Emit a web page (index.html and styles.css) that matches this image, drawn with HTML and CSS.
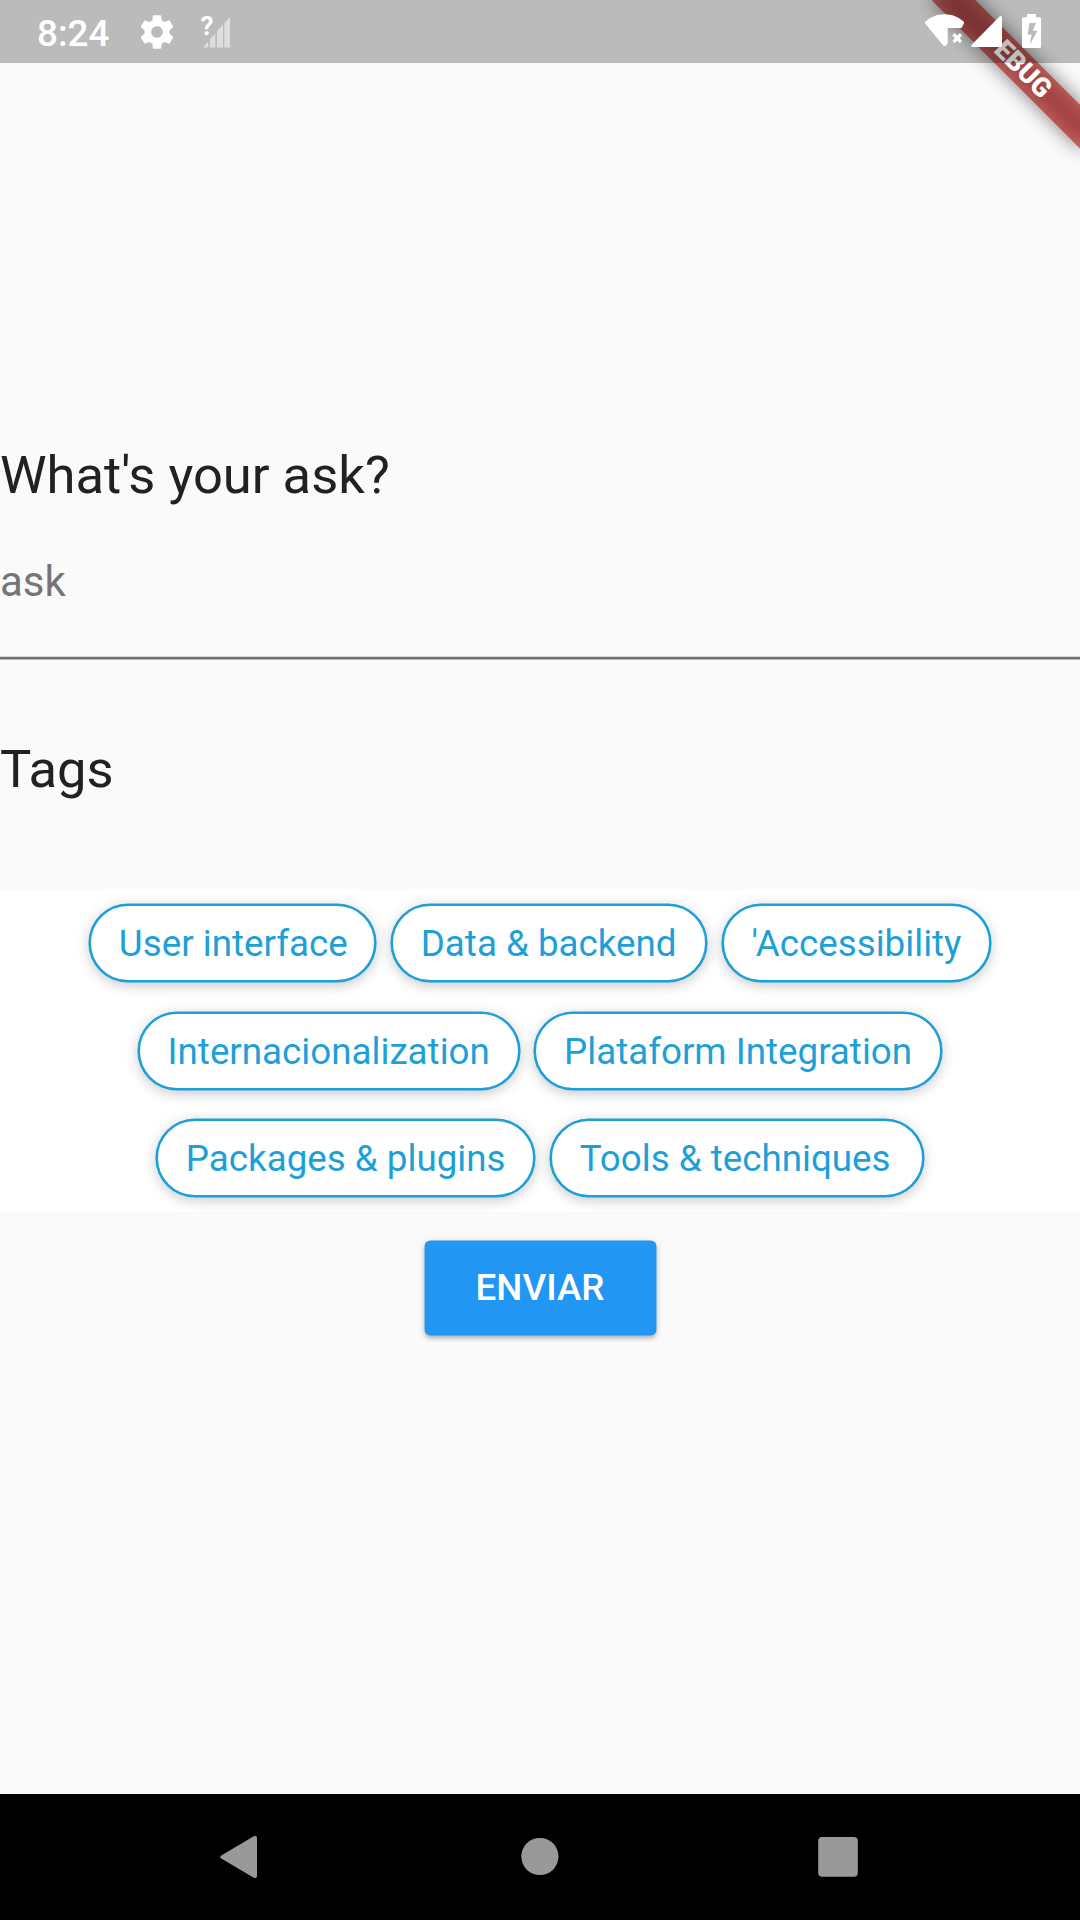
FILE: index.html
```html
<!DOCTYPE html>
<html lang="en">
<head>
<meta charset="utf-8">
<title>Ask</title>
<link rel="stylesheet" href="styles.css">
</head>
<body>
<div class="screen">
  <div class="banner" aria-hidden="true">
    <div class="banner-shadow"></div>
    <div class="banner-strip">DEBUG</div>
  </div>

  <header class="status-bar">
    <div class="status-left">
      <span class="clock">8:24</span>
      <svg class="icon-gear" viewBox="0 0 24 24"><path d="M19.43 12.98c.04-.32.07-.64.07-.98s-.03-.66-.07-.98l2.11-1.65c.19-.15.24-.42.12-.64l-2-3.46c-.12-.22-.39-.3-.61-.22l-2.49 1c-.52-.4-1.08-.73-1.69-.98l-.38-2.65C14.46 2.18 14.25 2 14 2h-4c-.25 0-.46.18-.49.42l-.38 2.65c-.61.25-1.17.59-1.69.98l-2.49-1c-.23-.09-.49 0-.61.22l-2 3.46c-.13.22-.07.49.12.64l2.11 1.65c-.04.32-.07.65-.07.98s.03.66.07.98l-2.11 1.65c-.19.15-.24.42-.12.64l2 3.46c.12.22.39.3.61.22l2.49-1c.52.4 1.08.73 1.69.98l.38 2.65c.03.24.24.42.49.42h4c.25 0 .46-.18.49-.42l.38-2.65c.61-.25 1.17-.59 1.69-.98l2.49 1c.23.09.49 0 .61-.22l2-3.46c.12-.22.07-.49-.12-.64l-2.11-1.65zM12 15.5c-1.93 0-3.5-1.57-3.5-3.5s1.57-3.5 3.5-3.5 3.500 1.57 3.500 3.500-1.57 3.500-3.500 3.500z"/></svg>
      <svg class="icon-unknown" viewBox="0 0 32 63">
        <path class="dim" d="M3 47.500L8.300 41.500V47.500zM10 39V47.500H15.300V33L14 34.500V36H12.500zM17 31V47.500H23V24.500zM24.300 23V47.500H30V17z"/>
        <text class="mark" x="0.400" y="34.500">?</text>
      </svg>
    </div>
    <svg class="status-right" viewBox="0 0 120 63">
      <path d="M5.200 23.600Q4.300 22.500 5.500 21.600C10.500 17 17 14.300 24.500 14.300S38.500 17 43.500 21.600Q44.700 22.500 43.800 23.600L41.500 28H27.700V43.500L25.800 45.500Q24.500 46.700 23.200 45.500z"/>
      <path class="cross" d="M33.500 34.300L41 42.100M41 34.300L33.500 42.100"/>
      <path d="M52.800 47Q50.300 46.500 51.700 44.800L79.500 16.600Q81.300 15.300 82 17.200V45.500Q82 47 80.500 47z"/>
      <path fill-rule="evenodd" d="M107 14H116V17.300H119.500Q121 17.300 121 18.800V46.500Q121 48 119.500 48H103.500Q102 48 102 46.500V18.800Q102 17.300 103.500 17.300H107zM109.500 23L107.700 34.500H111.700L110 44L117.400 30.700H113L115.800 23z"/>
    </svg>
  </header>

  <main class="content">
    <h1 class="heading">What's your ask?</h1>
    <div class="field">ask</div>
    <div class="underline"></div>
    <h2 class="heading tags-heading">Tags</h2>
    <section class="tags">
      <div class="tag-row">
        <span class="chip chip-ui">User interface</span>
        <span class="chip chip-data">Data &amp; backend</span>
        <span class="chip chip-a11y">'Accessibility</span>
      </div>
      <div class="tag-row">
        <span class="chip chip-i18n">Internacionalization</span>
        <span class="chip chip-platform">Plataform Integration</span>
      </div>
      <div class="tag-row">
        <span class="chip chip-packages">Packages &amp; plugins</span>
        <span class="chip chip-tools">Tools &amp; techniques</span>
      </div>
    </section>
    <button class="submit" type="button">ENVIAR</button>
  </main>

  <nav class="nav-bar">
    <svg viewBox="0 0 44 44"><path d="M4.300 20.500L36.800 1.300Q40 0 40 3V41Q40 44 36.800 42.700L4.300 23.500Q2.100 22 4.300 20.500z"/></svg>
    <svg viewBox="0 0 44 44"><circle cx="22.900" cy="21.500" r="18.600"/></svg>
    <svg viewBox="0 0 44 44"><rect x="2.200" y="2" width="39.600" height="39.800" rx="4"/></svg>
  </nav>
</div>
</body>
</html>
```

FILE: styles.css
```css
* { box-sizing: border-box; }

body {
  margin: 0;
  font-family: Roboto, sans-serif;
}

.screen {
  position: relative;
  display: flex;
  flex-direction: column;
  width: 1080px;
  height: 1920px;
  overflow: hidden;
  background: #fafafa;
}

/* Diagonal corner ribbon, rotated about the top-right corner */
.banner {
  position: absolute;
  top: 0;
  left: 1080px;
  width: 0;
  height: 0;
  transform: rotate(45deg);
}

.banner-shadow,
.banner-strip {
  position: absolute;
  left: -105px;
  top: 73.5px;
  width: 210px;
  height: 31.5px;
}

.banner-shadow {
  background: rgba(0, 0, 0, 0.5);
  filter: blur(9.6px);
}

.banner-strip {
  background: rgba(183, 28, 28, 0.627);
  color: #fff;
  font-size: 26.775px;
  font-weight: 900;
  line-height: 31.5px;
  text-align: center;
}

.status-bar {
  position: relative;
  display: flex;
  justify-content: space-between;
  height: 63px;
  padding: 0 38px 0 37px;
  background: rgba(0, 0, 0, 0.25);
}

.status-left { display: flex; align-items: center; }

.clock {
  width: 100px;
  padding-top: 4px;
  color: #fff;
  font-size: 36.75px;
  font-weight: 500;
  line-height: 63px;
}

.status-bar svg { fill: #fff; display: block; }
.icon-gear { width: 40px; height: 40px; }
.icon-unknown { width: 32px; height: 63px; margin-left: 23px; }
.icon-unknown .dim { fill: rgba(255, 255, 255, 0.5); }
.icon-unknown .mark { font-size: 26px; font-weight: 700; }
.status-right { width: 120px; height: 63px; margin-right: 2px; overflow: visible; }
.status-right .cross { stroke: #fff; stroke-width: 3.4px; fill: none; }

.content {
  flex: 1;
  display: flex;
  flex-direction: column;
}

.heading {
  margin: 381px 0 0;
  color: #212121;
  font-size: 52.5px;
  font-weight: 400;
  line-height: 62px;
}

.field {
  height: 49px;
  margin-top: 51px;
  color: #757575;
  font-size: 42px;
  line-height: 49px;
}

.underline {
  height: 4px;
  margin-top: 50px;
  background: linear-gradient(#dadada 1px, #707070 1px, #707070 3px, #b8b8b8 3px);
}

.tags-heading { margin-top: 78px; }

.tags {
  display: flex;
  flex-direction: column;
  gap: 29.5px;
  height: 323px;
  margin-top: 89px;
  padding-top: 15px;
  background: #fff;
}

.tag-row {
  display: flex;
  justify-content: center;
  gap: 14.3px;
}

.chip {
  height: 78px;
  padding-left: 28px;
  border: 2px solid #1e9fd8;
  border-radius: 39px;
  background: #fff;
  box-shadow: 0 0 0 0.6px #1e9fd8, 0 4px 12px rgba(0, 0, 0, 0.14), 0 1px 18px rgba(0, 0, 0, 0.09);
  color: #1e9fd8;
  font-size: 36.75px;
  line-height: 75px;
  white-space: nowrap;
}

.chip-ui { width: 287.6px; }
.chip-data { width: 316.5px; }
.chip-a11y { width: 269.6px; }
.chip-i18n { width: 382.2px; }
.chip-platform { width: 408.4px; }
.chip-packages { width: 379.6px; }
.chip-tools { width: 374.5px; }

.submit {
  align-self: center;
  width: 231px;
  height: 94px;
  margin-top: 29px;
  padding: 0;
  border: 0;
  border-radius: 5.25px;
  background: #2196f3;
  box-shadow: 0 0 0 0.4px #2196f3, 0 3px 5px rgba(0, 0, 0, 0.25), 0 1px 9px rgba(0, 0, 0, 0.12);
  color: #fff;
  font: 500 36.75px/94px Roboto, sans-serif;
}

.nav-bar {
  display: flex;
  justify-content: space-between;
  align-items: center;
  height: 126px;
  padding: 0 220px 0 217px;
  background: #000;
}

.nav-bar svg { width: 44px; height: 44px; fill: #999; }
```
